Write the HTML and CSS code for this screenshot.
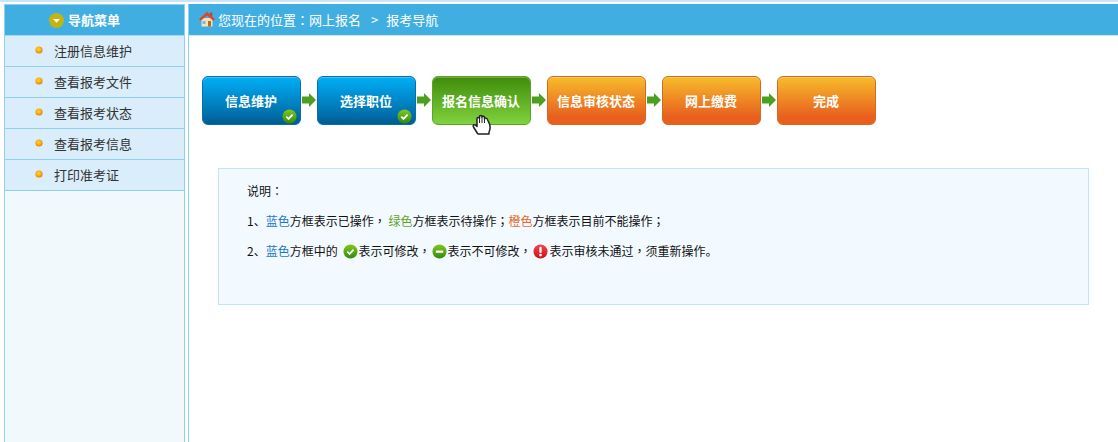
FILE: index.html
```html
<!DOCTYPE html>
<html lang="zh">
<head>
<meta charset="utf-8">
<title>报考导航</title>
<link rel="stylesheet" href="styles.css">
</head>
<body>
<svg class="defs" width="0" height="0">
  <defs>
    <linearGradient id="gOk" x1="0" y1="0" x2="0" y2="1"><stop offset="0" stop-color="#82c91e"/><stop offset="1" stop-color="#2f8a0c"/></linearGradient>
    <linearGradient id="gRed" x1="0" y1="0" x2="0" y2="1"><stop offset="0" stop-color="#f4474a"/><stop offset="1" stop-color="#c9111b"/></linearGradient>
    <radialGradient id="gDot" cx=".45" cy=".4" r=".6"><stop offset="0" stop-color="#ffd93a"/><stop offset=".6" stop-color="#f9a90e"/><stop offset="1" stop-color="#e07f00"/></radialGradient>
    <symbol id="ok" viewBox="0 0 16 16"><circle cx="8" cy="8" r="7.500" fill="url(#gOk)"/><path d="M4.600 8.200l2.400 2.300 4.300-4.400" fill="none" stroke="#fff" stroke-width="2"/></symbol>
    <symbol id="no" viewBox="0 0 16 16"><circle cx="8" cy="8" r="7.500" fill="url(#gOk)"/><rect x="4" y="6.800" width="8" height="2.400" rx=".6" fill="#fff"/></symbol>
    <symbol id="bad" viewBox="0 0 16 16"><circle cx="8" cy="8" r="7.500" fill="url(#gRed)"/><rect x="6.800" y="3" width="2.400" height="6.500" rx="1" fill="#fff"/><circle cx="8" cy="11.800" r="1.400" fill="#fff"/></symbol>
    <symbol id="dot" viewBox="0 0 8 8"><circle cx="4" cy="4" r="3.600" fill="url(#gDot)"/></symbol>
    <symbol id="arrow" viewBox="0 0 14 14"><path d="M0 3.500h7V0l7 7-7 7v-3.500H0z" fill="#4c9f1f"/></symbol>
  </defs>
</svg>
<div class="layout">
  <aside class="side">
    <h2 class="side-head">
      <svg class="head-icon" viewBox="0 0 15 15" width="15" height="15"><circle cx="7.500" cy="7.500" r="7.500" fill="#c2b411"/><path d="M4 6h7l-3.500 3.800z" fill="#fff"/></svg>
      <span>导航菜单</span>
    </h2>
    <ul class="menu">
      <li class="menu-item"><svg class="dot" width="8" height="8"><use href="#dot"/></svg>注册信息维护</li>
      <li class="menu-item"><svg class="dot" width="8" height="8"><use href="#dot"/></svg>查看报考文件</li>
      <li class="menu-item"><svg class="dot" width="8" height="8"><use href="#dot"/></svg>查看报考状态</li>
      <li class="menu-item"><svg class="dot" width="8" height="8"><use href="#dot"/></svg>查看报考信息</li>
      <li class="menu-item"><svg class="dot" width="8" height="8"><use href="#dot"/></svg>打印准考证</li>
    </ul>
  </aside>
  <main class="main">
    <div class="crumb">
      <svg class="home" viewBox="0 0 16 16" width="16" height="16">
        <rect x="2.500" y="7" width="11" height="8.500" fill="#f6e2b8"/>
        <rect x="11" y="1.500" width="2.200" height="5" fill="#b9452c"/>
        <path d="M0 8.300L8 .8l8 7.500-1.800 1.400L8 4.400 1.800 9.700z" fill="#dc452c"/>
        <rect x="3.500" y="10" width="3" height="3" fill="#7fb6dc"/>
        <rect x="9" y="10" width="3" height="5.500" fill="#b06a2a"/>
      </svg>
      <span>您现在的位置<span class="punct" lang="zh-TW">：</span>网上报名</span><span class="sep">&gt;</span><span>报考导航</span>
    </div>
    <div class="steps">
      <div class="step blue">信息维护<svg class="badge" width="15" height="15"><use href="#ok"/></svg></div>
      <svg class="arrow" width="14" height="14"><use href="#arrow"/></svg>
      <div class="step blue">选择职位<svg class="badge" width="15" height="15"><use href="#ok"/></svg></div>
      <svg class="arrow" width="14" height="14"><use href="#arrow"/></svg>
      <div class="step green">报名信息确认
        <svg class="hand" viewBox="0 0 20 21" width="20" height="21"><path d="M5.500 19.500L1.500 13C.5 11 2.300 10 3.800 11.200L5 12.500V4.500C5 3 7.500 3 7.500 4.500V2.500C7.500 1 10 1 10 2.500V3C10 1.800 12.500 1.800 12.500 3.200V5C12.500 3.800 15 3.800 15.300 5.200L17.500 10C18.500 13 18.300 15.500 17 18V20H6z" fill="#fff" stroke="#222" stroke-width="1.500" stroke-linejoin="round"/><path d="M7.500 4.500V9M10 3V9M12.500 5V9" fill="none" stroke="#222" stroke-width="1"/></svg>
      </div>
      <svg class="arrow" width="14" height="14"><use href="#arrow"/></svg>
      <div class="step orange">信息审核状态</div>
      <svg class="arrow" width="14" height="14"><use href="#arrow"/></svg>
      <div class="step orange">网上缴费</div>
      <svg class="arrow" width="14" height="14"><use href="#arrow"/></svg>
      <div class="step orange">完成</div>
    </div>
    <section class="note">
      <p class="line">说明<span class="punct" lang="zh-TW">：</span></p>
      <p class="line">1、<span class="c-blue">蓝色</span>方框表示已操作<span class="punct" lang="zh-TW">，</span> <span class="c-green">绿色</span>方框表示待操作<span class="punct" lang="zh-TW">；</span><span class="c-orange">橙色</span>方框表示目前不能操作<span class="punct" lang="zh-TW">；</span></p>
      <p class="line">2、<span class="c-blue">蓝色</span>方框中的 <svg class="ic ic-ok" width="15" height="15"><use href="#ok"/></svg>表示可修改<span class="punct" lang="zh-TW">，</span><svg class="ic" width="15" height="15"><use href="#no"/></svg>表示不可修改<span class="punct" lang="zh-TW">，</span><svg class="ic ic-bad" width="15" height="15"><use href="#bad"/></svg>表示审核未通过<span class="punct" lang="zh-TW">，</span>须重新操作。</p>
    </section>
  </main>
</div>
</body>
</html>
```
FILE: styles.css
```css
* { box-sizing: border-box; }
html, body { height: 100%; }
body {
  margin: 0;
  background: #fff;
  border-top: 2px solid #c8e6f5;
  font-family: "Noto Sans CJK SC", "Liberation Sans", sans-serif;
  font-size: 13px;
  color: #333;
  overflow: hidden;
}
.defs { position: absolute; }
.punct { font-family: "Noto Sans CJK TC", "Noto Sans CJK SC", sans-serif; }
.layout {
  display: flex;
  gap: 3px;
  height: 440px;
  padding: 2px 0 0 4px;
}
.side {
  width: 181px;
  flex: none;
  background: #f1f9fd;
  border: 1px solid #8fd0ee;
  border-bottom: 0;
}
.side-head {
  margin: 0;
  height: 31px;
  padding: 0 20px 2px 0;
  background: #41aee2;
  color: #fff;
  font-size: 13px;
  font-weight: bold;
  display: flex;
  align-items: center;
  justify-content: center;
  gap: 4px;
  border-bottom: 1px solid #9ed6f0;
}
.head-icon { flex: none; margin-top: 2px; }
.menu { list-style: none; margin: 0; padding: 0; }
.menu-item {
  height: 31px;
  background: #daedfa;
  border-bottom: 1px solid #8fd0ee;
  display: flex;
  align-items: center;
  padding: 0 0 2px 30px;
  color: #333;
}
.dot { flex: none; margin: -1px 11px 0 0; }
.main {
  flex: 1;
  min-width: 0;
  border-left: 1px solid #8fd0ee;
}
.crumb {
  height: 32px;
  background: #41aee2;
  color: #fff;
  display: flex;
  align-items: center;
  padding: 0 0 1px 10px;
  border-bottom: 1px solid #cfe9f7;
}
.home { flex: none; margin-right: 3px; }
.sep { margin: 0 8px 0 10px; }
.steps {
  display: flex;
  align-items: flex-start;
  margin: 40px 0 0 13px;
}
.step {
  position: relative;
  width: 99px;
  height: 49px;
  border-radius: 6px;
  color: #fff;
  font-weight: bold;
  display: flex;
  align-items: center;
  justify-content: center;
  padding-right: 1px;
  white-space: nowrap;
  box-shadow: inset 0 1px rgba(255, 255, 255, .25);
}
.blue { background: linear-gradient(#00aef5, #0073b0 75%, #005c92); border: 1px solid #0a6ea8; }
.green { background: linear-gradient(#3f8c0a, #80d23f); border: 1px solid #5da51f; }
.orange { background: linear-gradient(#f7bc2c, #e85f1e 85%); border: 1px solid #d36a1c; }
.badge { position: absolute; right: 3px; bottom: 0; }
.hand { position: absolute; left: 39px; top: 37px; }
.arrow { flex: none; margin: 17px 1px 0; }
.note {
  margin: 43px 29px 0;
  height: 137px;
  padding: 7px 28px;
  background: #f3faff;
  border: 1px solid #c5e3f6;
  font-size: 12px;
  color: #111;
}
.line { margin: 0; height: 30px; line-height: 30px; white-space: pre-wrap; }
.ic { vertical-align: -3px; margin: 0 0 0 2px; }
.ic-ok { margin-left: 3px; }
.ic-bad { margin-right: 1px; }
.c-blue { color: #1f78c8; }
.c-green { color: #5da51f; }
.c-orange { color: #e4682a; }
```
